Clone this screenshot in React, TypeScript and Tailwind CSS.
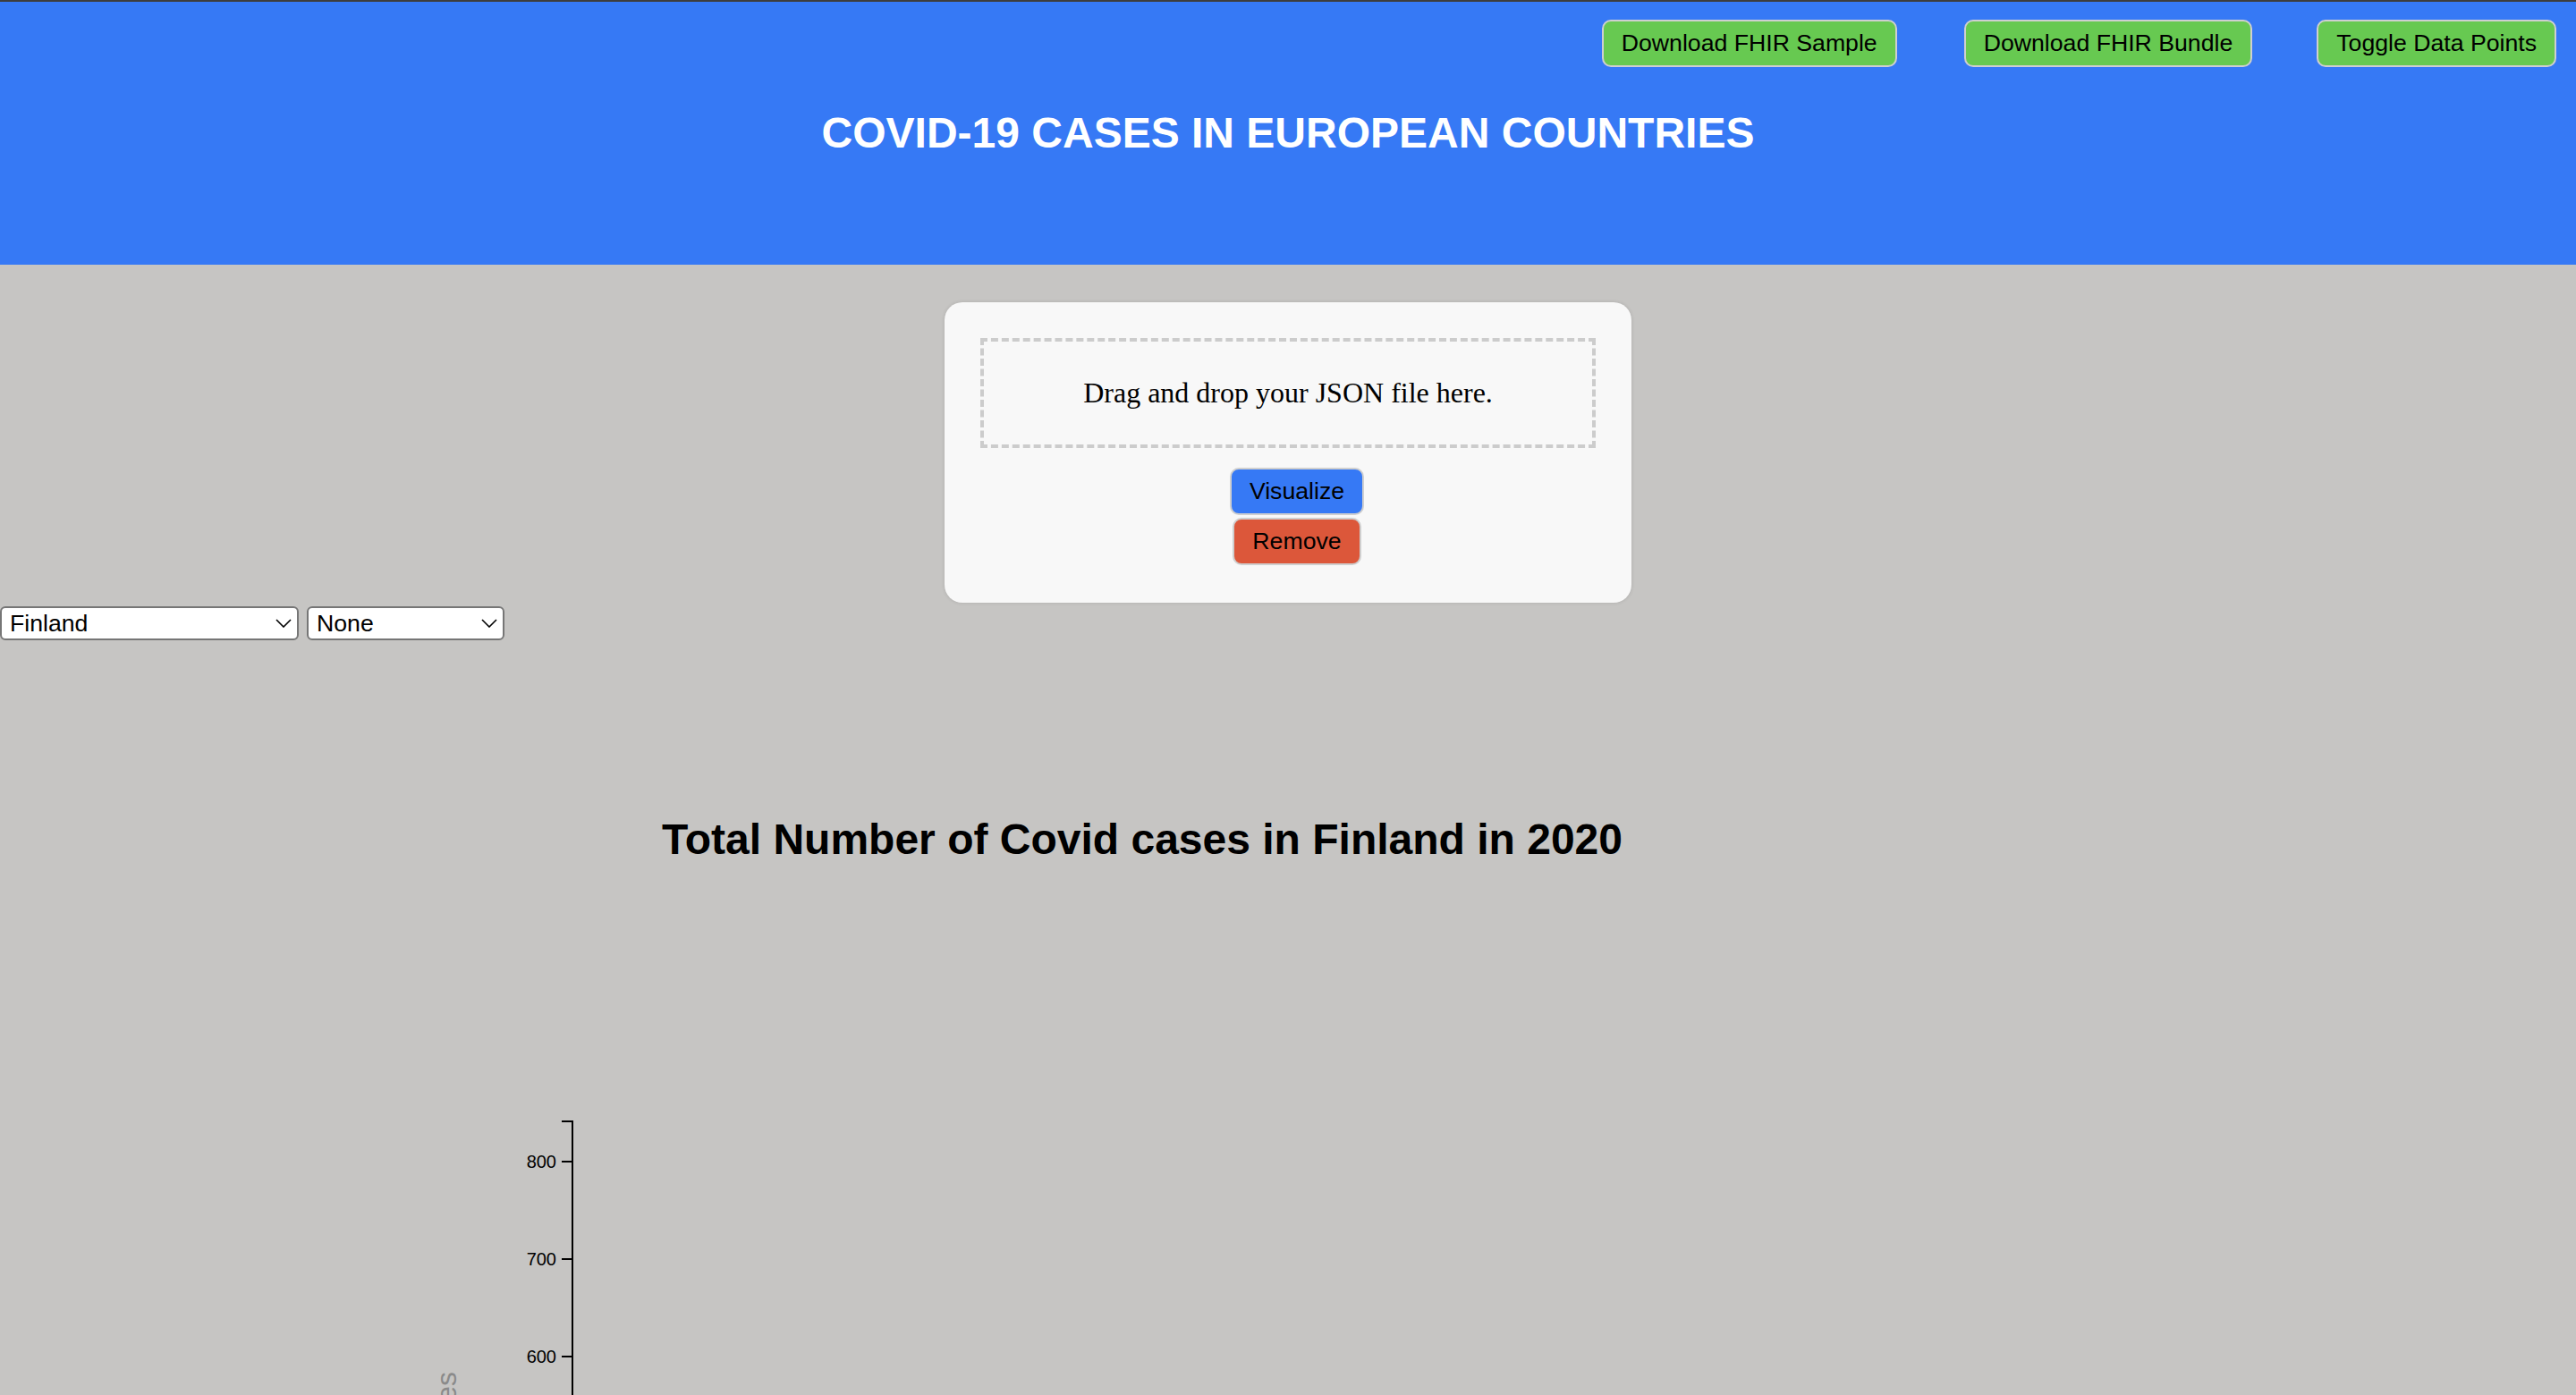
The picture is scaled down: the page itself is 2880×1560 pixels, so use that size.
const sans = '"Liberation Sans", Arial, sans-serif';

function Btn({ label, color }: { label: string; color: string }) {
  return (
    <button
      className={`rounded-[10px] border-2 border-[#cfcfcf] px-[20px] py-[10px] text-[26.67px] leading-[29px] text-black ${color}`}
      style={{ fontFamily: sans }}
    >
      {label}
    </button>
  );
}

function Dropdown({ value, width }: { value: string; width: string }) {
  return (
    <div className={`relative h-[38px] ${width}`}>
      <select
        defaultValue={value}
        className="h-full w-full appearance-none rounded-[6px] border-2 border-[#767676] bg-white pl-[9px] text-[26.67px] leading-[30px] text-black outline-none"
        style={{ fontFamily: sans }}
      >
        <option>{value}</option>
      </select>
      <svg
        className="pointer-events-none absolute top-[14px] right-[8px]"
        width={18}
        height={10}
        viewBox="0 0 18 10"
        fill="none"
        stroke="#000"
        strokeWidth={1.6}
      >
        <polyline points="1,1 9,9 17,1" />
      </svg>
    </div>
  );
}

function CasesChart() {
  // y axis: 1.09px per case, zero at y = 1455 inside the svg
  const zero = 1455;
  const ticks = [0, 100, 200, 300, 400, 500, 600, 700, 800];

  return (
    <svg width={2880} height={1500} className="block" style={{ fontFamily: sans }}>
      <text x={1277} y={239} textAnchor="middle" fontSize={48} fontWeight={700} fill="#000">
        Total Number of Covid cases in Finland in 2020
      </text>
      <g fill="none" stroke="#000" strokeWidth={2}>
        <path d={`M628,538 H640 V${zero} H628`} />
        {ticks.map((t) => (
          <line key={t} x1={628} x2={640} y1={zero - t * 1.09} y2={zero - t * 1.09} />
        ))}
      </g>
      <g fontSize={20} fill="#000" textAnchor="end">
        {ticks.map((t) => (
          <text key={t} x={622} y={zero - t * 1.09} dy="0.34em">
            {t}
          </text>
        ))}
      </g>
      <text
        transform="translate(510,818) rotate(-90)"
        textAnchor="end"
        fontSize={32}
        fill="#8a8a8a"
      >
        Number of Cases
      </text>
    </svg>
  );
}

export default function App() {
  return (
    <div className="min-h-screen border-t-2 border-[#3d3d3d] bg-[#c6c5c3]" style={{ fontFamily: sans }}>
      <header className="h-[294px] bg-[#3679f5]">
        <div className="flex justify-end pt-[20px] pr-[22px]">
          <Btn label="Download FHIR Sample" color="bg-[#67c951]" />
          <div className="ml-[75px]">
            <Btn label="Download FHIR Bundle" color="bg-[#67c951]" />
          </div>
          <div className="ml-[72px]">
            <Btn label="Toggle Data Points" color="bg-[#67c951]" />
          </div>
        </div>
        <h1 className="mt-[46px] text-center text-[48px] leading-[55px] font-bold text-white">
          COVID-19 CASES IN EUROPEAN COUNTRIES
        </h1>
      </header>

      <div className="mx-auto mt-[42px] w-[768px] rounded-[20px] bg-[#f8f8f8] p-[40px] pb-[42px] shadow-[0_0_4px_rgba(0,0,0,0.12)]">
        <div
          className="border-4 border-dashed border-[#cccccc] py-[39px] text-center text-[32px] leading-[37px] text-black"
          style={{ fontFamily: '"Liberation Serif", "Times New Roman", serif' }}
        >
          Drag and drop your JSON file here.
        </div>
        <div className="mt-[22px] flex flex-col items-center gap-[3px] pl-[20px]">
          <Btn label="Visualize" color="bg-[#3679f5]" />
          <Btn label="Remove" color="bg-[#dc573a]" />
        </div>
      </div>

      <div className="mt-[4px] flex gap-[9px]">
        <Dropdown value="Finland" width="w-[334px]" />
        <Dropdown value="None" width="w-[221px]" />
      </div>

      <CasesChart />
    </div>
  );
}
